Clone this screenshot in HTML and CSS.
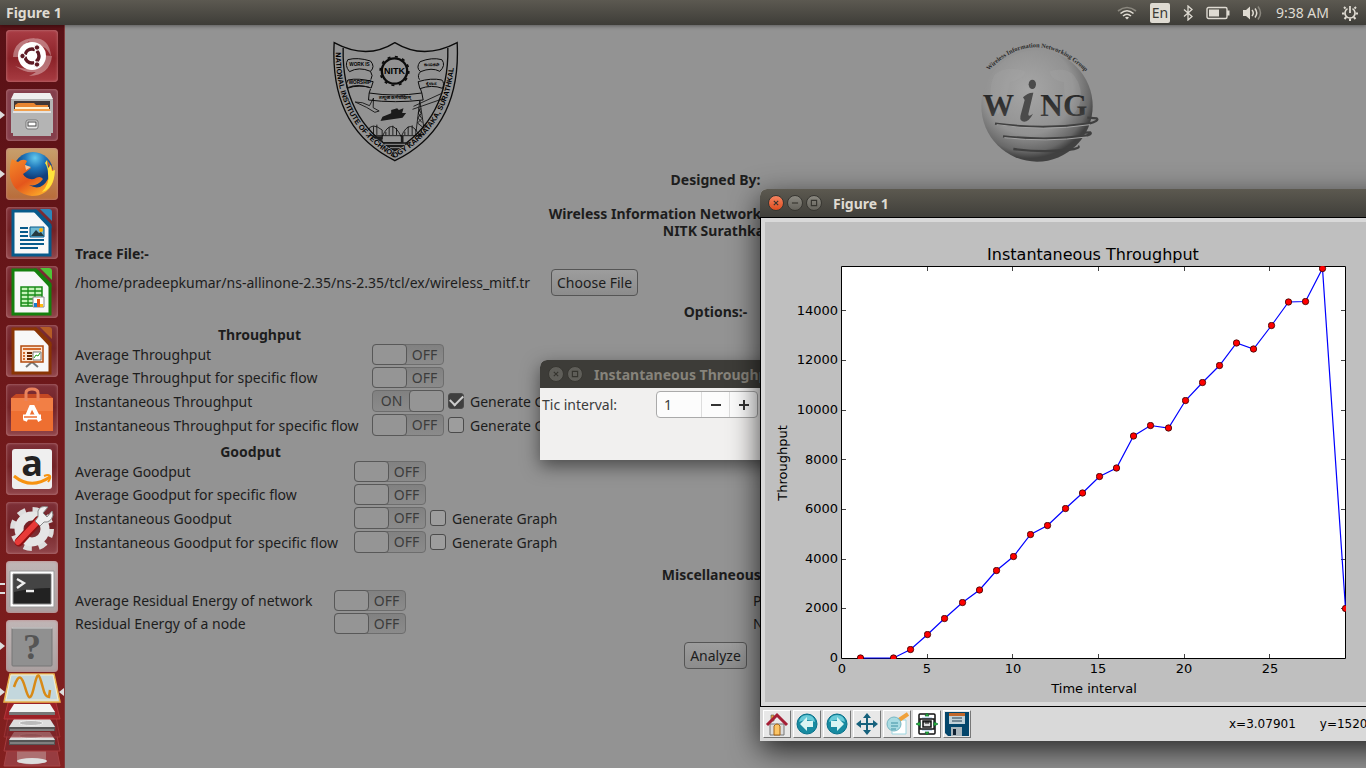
FILE: index.html
```html
<!DOCTYPE html>
<html lang="en">
<head>
<meta charset="utf-8">
<title>Figure 1</title>
<link rel="stylesheet" href="styles.css">
</head>
<body>
<div class="desktop">
<header class="panel">
  <span class="panel-title">Figure 1</span>
  <div class="indicators">
    <svg width="20" height="16" viewBox="0 0 20 16" fill="none" stroke-width="1.6"><path d="M1 6Q10-1 19 6" stroke="#8b887f"/><path d="M3.500 8.500Q10 3 16.500 8.500M6 11Q10 7.500 14 11" stroke="#dfdbd2"/><path d="M8 12.500Q10 11 12 12.500L10 14.500Z" fill="#dfdbd2"/></svg>
    <span class="lang">En</span>
    <svg width="10" height="16" viewBox="0 0 10 16" fill="none" stroke="#dfdbd2" stroke-width="1.300"><path d="M1 4.500L9 11.500L5 15V1L9 4.500L1 11.500"/></svg>
    <svg width="24" height="14" viewBox="0 0 24 14"><rect x="1" y="1.500" width="20" height="11" rx="1.500" fill="none" stroke="#dfdbd2" stroke-width="1.400"/><path d="M3 3.500H13V10.500H3ZM21 4.500H23.500V9.500H21Z" fill="#dfdbd2"/></svg>
    <svg width="20" height="16" viewBox="0 0 20 16"><path d="M0 5H3L7 1.500V14.500L3 11H0Z" fill="#dfdbd2"/><path d="M9 5Q11.500 8 9 11M12 3.500Q15.500 8 12 12.500" fill="none" stroke="#dfdbd2" stroke-width="1.500"/><path d="M15 1.500Q20 8 15 14.500" fill="none" stroke="#8b887f" stroke-width="1.500"/></svg>
    <time class="clock">9:38 AM</time>
    <svg width="16" height="16" viewBox="0 0 16 16" fill="none" stroke="#dfdbd2"><path d="M5.500 3.600A5 5 0 1 0 10.500 3.600" stroke-width="1.600"/><path d="M8 1V8" stroke-width="1.800"/><path d="M3.500 3.500L2 2M12.500 3.500L14 2M2.500 8.500H0M13.500 8.500H16M4.300 12L2.500 14M11.700 12L13.500 14M8 13.500V16" stroke-width="2"/></svg>
  </div>
</header>
<div class="workspace">
<nav class="launcher" aria-label="Launcher">
  <button class="tile dash" aria-label="Dash"><svg viewBox="0 0 52 52"><path d="M7 27Q8 9 29 8Q15 13 17 27M22 9Q43 5 45 26Q39 13 25 15M46 26Q44 45 23 46Q38 40 36 25M43 33Q29 50 9 36Q20 41 32 38" fill="#fff" opacity=".35"/><circle cx="26" cy="26" r="14" fill="#fff"/><circle cx="26" cy="26" r="7" fill="none" stroke="#5d1a24" stroke-width="3.400" stroke-dasharray="12.600 2.060" stroke-dashoffset="6"/><g fill="#5d1a24" stroke="#fff"><circle cx="16.500" cy="26" r="2.700"/><circle cx="31" cy="17.500" r="2.700"/><circle cx="31" cy="34.500" r="2.700"/></g></svg></button>
  <button class="tile files running" aria-label="Files"><svg viewBox="0 0 52 52"><path d="M8 4H44L47 11V44H5V11Z" fill="#b5b5b5"/><path d="M8 4H44L47 10H5Z" fill="#eee"/><path d="M8 12H44V24H8Z" fill="#403636"/><path d="M9 16L12 14H28L30 16H42V24H9Z" fill="#e88631"/><path d="M9 18H43V21H9Z" fill="#fff0cf"/><path d="M8 20H44V24H8Z" fill="#f3a04b"/><path d="M7 22H45V47H7Z" fill="#b4b4b4"/><path d="M7 22H45V24H7Z" fill="#e2e2e2"/><rect x="20" y="31" width="12" height="9" rx="2" fill="#e9e9e9" stroke="#777" stroke-width="1"/><rect x="22" y="33" width="8" height="4" fill="#fff" stroke="#444"/></svg></button>
  <button class="tile firefox running" aria-label="Firefox"><svg viewBox="0 0 52 52"><defs><radialGradient id="globe" cx=".55" cy=".15"><stop offset="0" stop-color="#63c9ec"/><stop offset=".5" stop-color="#1f77bb"/><stop offset="1" stop-color="#123f7c"/></radialGradient><linearGradient id="fox" x2=".8" y2="1"><stop stop-color="#f48a2a"/><stop offset=".55" stop-color="#e4561c"/><stop offset="1" stop-color="#ffb62b"/></linearGradient></defs><circle cx="27" cy="24" r="20" fill="url(#globe)"/><path d="M6 11L12 14Q17 10 21 13L19 17L25 20Q20 24 17 26Q20 32 28 31Q34 27 37 31Q31 39 23 37Q35 44 42 31Q45 24 41 12Q51 24 47 34Q41 48 26 48Q8 46 4 29Q3 18 6 11Z" fill="url(#fox)"/><path d="M41 12L42 20L45 17L46 23L49 22Q48 41 36 44Q44 35 42 26Q42 19 39 15Z" fill="#ffe23b"/><path d="M19 17L25 19L20 22Z" fill="#f8c496"/></svg></button>
  <button class="tile" aria-label="LibreOffice Writer"><svg viewBox="0 0 52 52"><path d="M7 4H30L44 18V48H7Z" fill="#f8f8f8" stroke="#075a8b" stroke-width="3"/><path d="M28 3L45 21" stroke="#075a8b" stroke-width="3"/><path d="M34 2H43Q46 2 46 5V14Z" fill="#2e86b8"/><path d="M14 21H22M14 25H22M14 29H22M14 33H38M14 37H38M14 41H32" stroke="#075a8b" stroke-width="2"/><path d="M24 20H38V30H24Z" fill="#70bad4" stroke="#075a8b"/><path d="M25 29L30 23L33 26L35 25L38 29Z" fill="#263b40"/><circle cx="35" cy="23" r="2" fill="#ffb300"/></svg></button>
  <button class="tile" aria-label="LibreOffice Calc"><svg viewBox="0 0 52 52"><path d="M7 4H30L44 18V48H7Z" fill="#f8f8f8" stroke="#15800d" stroke-width="3"/><path d="M28 3L45 21" stroke="#15800d" stroke-width="3"/><path d="M34 2H43Q46 2 46 5V14Z" fill="#4fc438"/><path d="M15 21H36V40H15Z" fill="#c5f3b8" stroke="#188b17" stroke-width="1.500"/><path d="M15 25H36M15 29H36M15 33H36M15 37H36M22 21V40M29 21V40" stroke="#188b17" stroke-width="1.300"/><path d="M27 31H38V41H27Z" fill="#fff" stroke="#888"/><path d="M28 37H31V41H28Z" fill="#187bd0"/><path d="M31 33H34V41H31Z" fill="#e55813"/><path d="M34 38H37V41H34Z" fill="#ffbd13"/></svg></button>
  <button class="tile" aria-label="LibreOffice Impress"><svg viewBox="0 0 52 52"><path d="M7 4H30L44 18V48H7Z" fill="#f8f8f8" stroke="#8a3505" stroke-width="3"/><path d="M28 3L45 21" stroke="#8a3505" stroke-width="3"/><path d="M34 2H43Q46 2 46 5V14Z" fill="#b55c26"/><path d="M20 42L26 37L32 42" fill="none" stroke="#777" stroke-width="2"/><path d="M15 21H37V37H15Z" fill="#fce5d2" stroke="#b44b0e" stroke-width="1.500"/><path d="M17 24H35M17 28H19M17 31H19M17 34H19" stroke="#d46a2c" stroke-width="2"/><path d="M21 28H26M21 31H26M21 34H26" stroke="#6c2800" stroke-width="2"/><path d="M27 27H35V35H27Z" fill="#fff" stroke="#777"/><path d="M28 33L30 30L32 31L34 28" fill="none" stroke="#23a01c"/></svg></button>
  <button class="tile" aria-label="Software Center"><svg viewBox="0 0 52 52"><path d="M5 14L10 10H42L47 14Z" fill="#c44823"/><path d="M5 14H47V47H5Z" fill="#ee6f31"/><path d="M5 14H47V27H5Z" fill="#f58a54" opacity=".6"/><path d="M20 17V9Q20 5 26 5T32 9V17" fill="none" stroke="#e9835d" stroke-width="3"/><path d="M19 37L25 23H27L34 37" fill="none" stroke="#fff" stroke-width="4"/><path d="M17 33H35" stroke="#fff" stroke-width="5"/><path d="M18 33H31" stroke="#ee6f31" stroke-width="1.500"/></svg></button>
  <button class="tile" aria-label="Amazon"><svg viewBox="0 0 52 52"><rect x="6" y="6" width="40" height="40" rx="3" fill="#efefef"/><text x="26" y="33" text-anchor="middle" class="amazon-a">a</text><path d="M8 33Q25 47 44 34" fill="none" stroke="#f79310" stroke-width="3"/><path d="M38 33Q43 31 44 33T42 39" fill="none" stroke="#f79310" stroke-width="2"/></svg></button>
  <button class="tile" aria-label="System Settings"><svg viewBox="0 0 52 52"><circle cx="26" cy="27" r="19" fill="none" stroke="#ddd" stroke-width="6" stroke-dasharray="8 6.920"/><circle cx="26" cy="27" r="13" fill="none" stroke="#e5e5e5" stroke-width="9"/><path d="M13 40L33 18" stroke="#8d1012" stroke-width="9" stroke-linecap="round"/><path d="M12 40L32 19" stroke="#e83a38" stroke-width="6" stroke-linecap="round"/><path d="M29 19L34 24L38 20Q45 21 47 13L46 9L41 15L37 11L42 5Q34 3 32 9V15Z" fill="#eee" stroke="#888"/></svg></button>
  <button class="tile light running double" aria-label="Terminal"><svg viewBox="0 0 52 52"><path d="M4 10H48V46H4Z" fill="#fff" stroke="#999"/><path d="M7 13H45V43H7Z" fill="#222" stroke="#888"/><path d="M8 14H44V27Q25 27 8 31Z" fill="#444"/><path d="M11 18L18 22L11 27M20 30H28" fill="none" stroke="#eee" stroke-width="2.300"/></svg></button>
  <button class="tile light running" aria-label="Unknown application"><svg viewBox="0 0 52 52"><rect x="6" y="8" width="40" height="38" rx="1" fill="#909090" stroke="#777"/><path d="M6 8H46" stroke="#ddd"/><text x="26" y="39" text-anchor="middle" class="question">?</text></svg></button>
  <button class="stack" aria-label="Figure 1 and devices"><svg viewBox="0 0 64 96">
    <path d="M9 68H55L60 94H4Z" fill="#973c40" stroke="#a64447"/><path d="M17 75H46V90Q31 95 17 90Z" fill="#ad7071"/><ellipse cx="32" cy="89" rx="15" ry="3" fill="#ddd"/>
    <path d="M9 54H55L60 79H4Z" fill="#7e2428" stroke="#a53a3d"/><path d="M14 61H50L55 67V73H9V68Z" fill="#555"/><path d="M14 60H50L55 68H9Z" fill="#ddd"/><ellipse cx="31" cy="64" rx="12" ry="2.500" fill="#bbb" stroke="#eee"/><path d="M10 71H54" stroke="#aaa"/>
    <path d="M9 40H55L60 65H4Z" fill="#7e2428" stroke="#a53a3d" opacity=".7"/><path d="M14 48H50L55 54V59H9V55Z" fill="#555"/><path d="M14 47H50L55 55H9Z" fill="#ddd"/><ellipse cx="31" cy="51" rx="12" ry="2.500" fill="#bbb" stroke="#eee"/><path d="M10 58H54" stroke="#aaa"/>
    <path d="M9 27H55L60 47H4Z" fill="#9b2026" stroke="#b43539"/><path d="M14 34H50L55 40V43H9V40Z" fill="#777"/><path d="M14 32H50L55 40H9Z" fill="#f3f3f3"/>
    <path d="M10 2H54L60 30H4Z" fill="#c3d7dd" stroke="#edb44d" stroke-width="1.500"/><path d="M11 3H53L58 28H6Z" fill="none" stroke="#f8efce"/><path d="M14 15C19 0 22 5 25 15S30 32 34 15S39 1 43 16Q45 25 49 25L50 18" fill="none" stroke="#d88a17" stroke-width="2.500"/>
    <path d="M0 16L5 20L0 24ZM64 16L59 20L64 24Z" fill="#ddd"/></svg></button>
</nav>

<main class="app">
  <div class="logos">
    <svg class="nitk" viewBox="36 34 380 366" role="img" aria-label="NITK crest">
      <defs><path id="rim" d="M47 66Q43 282 224 385Q407 280 403 60"/></defs>
      <g fill="none" stroke="#0b0b0b" stroke-width="4"><path d="M42 39Q140 92 224 39Q310 92 411 39Q424 296 224 393Q28 296 42 39Z"/><path d="M69 55Q64 267 224 363Q387 267 383 55"/>
      <circle cx="223" cy="124" r="38" stroke-width="7"/><circle cx="223" cy="124" r="43" stroke-width="5" stroke-dasharray="9 13.500"/>
      <path d="M83 90Q112 82 151 94Q166 111 151 125Q116 110 88 126Q72 107 83 90M83 151Q115 144 159 156L153 175Q117 163 81 176Q76 159 83 151M151 125Q160 138 152 150M365 90Q335 82 300 96Q286 114 301 126Q335 112 359 125Q378 107 365 90M365 151Q333 144 294 156L299 177Q335 164 367 176Q374 160 365 151M301 126Q290 138 298 150M147 190Q224 202 305 190L309 211Q224 221 145 211ZM151 178L147 190M301 178L305 190" stroke-width="3"/>
      <path d="M105 217Q127 216 148 228L160 205L159 234L177 244L164 248L139 233ZM312 300L299 213L288 303M292 280L307 292M293 265L306 279M294 250L304 265M296 236L302 250M307 265L292 280M304 250L293 265M302 236L294 250M277 239L369 207M280 230L367 190M144 301Q155 277 186 301V321Q214 260 243 321Q270 260 299 321Q311 270 319 293M160 290V315M170 285V316M197 307V317M207 293V316M218 288V316M229 295V316M254 306V316M264 291V316M276 287V316M287 299V316M137 318H306" stroke-width="2.500"/></g>
      <path d="M181 274L187 261L213 251V241L231 236L236 241L250 236L246 250H258L247 264L185 273ZM156 320H188V337H242V319H250V338H274L224 362L170 328Z" fill="#1b1b1b"/><path d="M185 331H231M193 344H255M209 354H241" stroke="#939393" stroke-width="3"/>
      <path d="M84 172Q109 160 147 171L148 174Q115 165 82 175Z" fill="#111"/>
      <text class="crest-name" x="223" y="134" text-anchor="middle">NITK</text><text class="crest-motto" x="118" y="109" text-anchor="middle">WORK IS</text><text class="crest-motto" x="119" y="164" text-anchor="middle">WORSHIP</text><text class="crest-motto" x="224" y="209" text-anchor="middle">तत्पूजा कर्मचोदितम्</text><text class="crest-motto" x="334" y="110" text-anchor="middle">ಕಾಯಕವೇ</text><text class="crest-motto" x="334" y="165" text-anchor="middle">ಕೈಲಾಸ</text>
      <text class="crest-rim"><textPath href="#rim" startOffset="2">NATIONAL INSTITUTE OF TECHNOLOGY KARNATAKA, SURATHKAL</textPath></text>
    </svg>
    <svg class="wing" viewBox="30 36 360 364" role="img" aria-label="WiNG logo">
      <defs><radialGradient id="sphere" cx=".42" cy=".35" r=".62"><stop offset="0" stop-color="#a6a6a6"/><stop offset=".65" stop-color="#929292"/><stop offset=".9" stop-color="#686868"/><stop offset="1" stop-color="#414141"/></radialGradient><path id="arc" d="M56 124Q197-20 352 132"/><linearGradient id="letters" x2="0" y2="1"><stop stop-color="#222"/><stop offset="1" stop-color="#444"/></linearGradient></defs>
      <circle cx="201" cy="230" r="167" fill="url(#sphere)"/><path d="M74 136Q108 106 164 126Q171 145 119 159Q109 229 84 256Q45 193 74 136M239 126Q300 107 324 157Q349 216 306 260Q280 216 282 159Q241 151 239 126" fill="#a5a5a5" opacity=".3"/>
      <text class="wing-arc"><textPath href="#arc">Wireless Information Networking Group</textPath></text>
      <text class="wing-name" x="38" y="260">W</text><text class="wing-name" x="211" y="260">NG</text><g fill="#4b4b4b"><ellipse cx="187" cy="165" rx="11" ry="14"/><path d="M159 204Q173 189 190 190L175 254Q174 265 189 253Q174 282 157 276Q147 270 153 253L164 212Z"/></g>
      <g fill="none" stroke="#404040" stroke-width="7"><path d="M75 283Q222 302 357 283Q389 274 380 267L352 265"/><path d="M99 321Q230 335 343 320Q369 315 360 309L341 310"/><path d="M130 359Q231 372 312 359Q331 355 324 350"/></g><path d="M80 286Q220 307 360 286M103 325Q230 339 350 323" fill="none" stroke="#a3a3a3" stroke-width="3"/>
    </svg>
  </div>
  <div class="credits"><h2>Designed By:</h2><p>Wireless Information Networking Group (WiNG)</p><p>NITK Surathkal</p></div>
  <h2 class="trace-title">Trace File:-</h2>
  <div class="trace"><span class="trace-path">/home/pradeepkumar/ns-allinone-2.35/ns-2.35/tcl/ex/wireless_mitf.tr</span><button class="push">Choose File</button></div>
  <h2 class="options-title">Options:-</h2>
  <section class="group throughput">
    <h3>Throughput</h3>
    <label for="t1">Average Throughput</label><span class="switch"><input type="checkbox" role="switch" id="t1"><span>OFF</span></span>
    <label for="t2">Average Throughput for specific flow</label><span class="switch"><input type="checkbox" role="switch" id="t2"><span>OFF</span></span>
    <label for="t3">Instantaneous Throughput</label><span class="switch on"><input type="checkbox" role="switch" id="t3" checked><span>ON</span></span><label class="graph"><input type="checkbox" checked>Generate Graph</label>
    <label for="t4">Instantaneous Throughput for specific flow</label><span class="switch"><input type="checkbox" role="switch" id="t4"><span>OFF</span></span><label class="graph"><input type="checkbox">Generate Graph</label>
  </section>
  <section class="group goodput">
    <h3>Goodput</h3>
    <label for="g1">Average Goodput</label><span class="switch"><input type="checkbox" role="switch" id="g1"><span>OFF</span></span>
    <label for="g2">Average Goodput for specific flow</label><span class="switch"><input type="checkbox" role="switch" id="g2"><span>OFF</span></span>
    <label for="g3">Instantaneous Goodput</label><span class="switch"><input type="checkbox" role="switch" id="g3"><span>OFF</span></span><label class="graph"><input type="checkbox">Generate Graph</label>
    <label for="g4">Instantaneous Goodput for specific flow</label><span class="switch"><input type="checkbox" role="switch" id="g4"><span>OFF</span></span><label class="graph"><input type="checkbox">Generate Graph</label>
  </section>
  <h2 class="misc-title">Miscellaneous:-</h2>
  <section class="group misc">
    <label for="m1">Average Residual Energy of network</label><span class="switch"><input type="checkbox" role="switch" id="m1"><span>OFF</span></span><span class="other">Packet Delivery</span>
    <label for="m2">Residual Energy of a node</label><span class="switch"><input type="checkbox" role="switch" id="m2"><span>OFF</span></span><span class="other">Network Load</span>
  </section>
  <div class="actions"><button class="push">Analyze</button></div>
</main>
</div>

<section class="window dialog" aria-label="Instantaneous Throughput">
  <div class="titlebar"><button class="wb" aria-label="Close"><svg viewBox="0 0 16 16"><path d="M5.500 5.500L10.500 10.500M10.500 5.500L5.500 10.500"/></svg></button><button class="wb" aria-label="Maximize"><svg viewBox="0 0 16 16"><path d="M5 5H11V11H5Z"/></svg></button><span>Instantaneous Throughput</span></div>
  <div class="dialog-body"><label for="tic">Tic interval:</label><div class="spin"><input id="tic" type="text" value="1"><button aria-label="Decrease"><svg viewBox="0 0 12 12"><path d="M1 6H11"/></svg></button><button aria-label="Increase"><svg viewBox="0 0 12 12"><path d="M1 6H11M6 1V11"/></svg></button></div></div>
</section>

<section class="window figure" aria-label="Figure 1">
  <div class="titlebar"><button class="wb close" aria-label="Close"><svg viewBox="0 0 16 16"><path d="M5.500 5.500L10.500 10.500M10.500 5.500L5.500 10.500"/></svg></button><button class="wb" aria-label="Minimize"><svg viewBox="0 0 16 16"><path d="M4.500 8H11.500"/></svg></button><button class="wb" aria-label="Maximize"><svg viewBox="0 0 16 16"><path d="M5 5H11V11H5Z"/></svg></button><span>Figure 1</span></div>
  <div class="canvas">
    <svg class="chart" viewBox="765 222 644 480" role="img" aria-label="Instantaneous Throughput plot">
      <defs><clipPath id="axes"><path d="M841 266H1346V659H841Z"/></clipPath><marker id="dot" viewBox="0 0 8 8" refX="4" refY="4" markerWidth="8" markerHeight="8" markerUnits="userSpaceOnUse"><circle cx="4" cy="4" r="3.200" fill="#f00" stroke="#300" stroke-width=".8"/></marker></defs>
      <path d="M841.500 266.500H1345.500V658.500H841.500Z" fill="#fff" stroke="#000"/>
      <path d="M927.500 658V654M1012.500 658V654M1098.500 658V654M1184.500 658V654M1269.500 658V654M927.500 267V271M1012.500 267V271M1098.500 267V271M1184.500 267V271M1269.500 267V271M842 608.500H846M842 559.500H846M842 509.500H846M842 459.500H846M842 410.500H846M842 360.500H846M842 310.500H846M1345 608.500H1341M1345 559.500H1341M1345 509.500H1341M1345 459.500H1341M1345 410.500H1341M1345 360.500H1341M1345 310.500H1341" stroke="#444"/>
      <polyline clip-path="url(#axes)" fill="none" stroke="#00f" stroke-width="1.200" marker-start="url(#dot)" marker-mid="url(#dot)" marker-end="url(#dot)" points="860.500,658 893.500,658 910.500,649.500 927.500,634.500 944.500,618.500 962.500,602.500 979.500,590 996.500,570.500 1013.500,556.500 1030.500,534.500 1047.500,525.500 1065.500,508.500 1082.500,493 1099.500,476.500 1116.500,468 1133.500,436 1150.500,425.500 1168.500,428 1185.500,400.500 1202.500,382.500 1219.500,365.500 1236.500,343 1253.500,349 1271.500,325.500 1288.500,302 1305.500,301.500 1322.500,268.500 1345.500,608.500"/>
      <g class="ticks" text-anchor="end"><text x="838" y="662">0</text><text x="838" y="612">2000</text><text x="838" y="563">4000</text><text x="838" y="513">6000</text><text x="838" y="464">8000</text><text x="838" y="414">10000</text><text x="838" y="364">12000</text><text x="838" y="315">14000</text></g>
      <g class="ticks" text-anchor="middle"><text x="842" y="673">0</text><text x="927" y="673">5</text><text x="1013" y="673">10</text><text x="1098" y="673">15</text><text x="1184" y="673">20</text><text x="1270" y="673">25</text><text x="1094" y="693">Time interval</text><text transform="translate(787 463) rotate(-90)">Throughput</text></g>
      <text class="plot-title" x="1093" y="260" text-anchor="middle">Instantaneous Throughput</text>
    </svg>
  </div>
  <div class="toolbar">
    <button aria-label="Home"><svg viewBox="0 0 24 24"><path d="M5 12H19V23H5Z" fill="#ddd" stroke="#777"/><path d="M6 3H9V9H6Z" fill="#e6a13e" stroke="#555" stroke-width=".6"/><path d="M9 23V14Q12 10 15 14V23Z" fill="#fcc565" stroke="#a26317"/><path d="M2 13L12 3L22 13" fill="none" stroke="#a51f36" stroke-width="3"/></svg></button>
    <button aria-label="Back"><svg viewBox="0 0 24 24"><circle cx="12" cy="12" r="10" fill="#188ba1" stroke="#08718a"/><path d="M4 10Q5 3 12 3T20 10Q12 6 4 10" fill="#69cbd8"/><path d="M5 12L12 5V9H18V15H12V19Z" fill="#d9f5f3"/></svg></button>
    <button aria-label="Forward"><svg viewBox="0 0 24 24"><circle cx="12" cy="12" r="10" fill="#188ba1" stroke="#08718a"/><path d="M4 10Q5 3 12 3T20 10Q12 6 4 10" fill="#69cbd8"/><path d="M19 12L12 5V9H6V15H12V19Z" fill="#d9f5f3"/></svg></button>
    <button aria-label="Pan"><svg viewBox="0 0 24 24" fill="#16617c"><path d="M12 1L16 6H13V11H18V8L23 12L18 16V13H13V18H16L12 23L8 18H11V13H6V16L1 12L6 8V11H11V6H8Z"/></svg></button>
    <button aria-label="Zoom"><svg viewBox="0 0 24 24"><path d="M7 8H21V22H7Z" fill="#fff" stroke="#9dd5df"/><path d="M14 8L23 2" stroke="#f0a13b" stroke-width="4"/><circle cx="9" cy="12" r="7" fill="#a9dbe2" stroke="#77b6c2"/><path d="M6 11H13M6 14H13M6 17H11" stroke="#3e91a4"/></svg></button>
    <button aria-label="Subplots" class="white"><svg viewBox="0 0 24 24"><rect x="4" y="2" width="16" height="20" rx="1" fill="#fff" stroke="#111" stroke-width="1.500"/><path d="M7 5H17V19H7Z" fill="#c9def2"/><path d="M5 7H19V17H5Z" fill="#fff" stroke="#111" stroke-width="1.300"/><path d="M8 9H16V15H8Z" fill="#ddd" stroke="#111" stroke-width="1.500"/><path d="M8 10H16M11 9V12M13 9V12" stroke="#111"/><path d="M12 1L14 4H10ZM12 23L10 20H14ZM1 12L5 10V14ZM23 12L19 10V14Z" fill="#35bd34" stroke="#063" stroke-width=".7"/></svg></button>
    <button aria-label="Save" class="save"><svg viewBox="0 0 24 24"><path d="M0 0H24V24H3L0 21Z" fill="#04466b"/><path d="M4 1H20V12H4Z" fill="#c2d1d8"/><path d="M4 1H20V4H4Z" fill="#c2682c"/><path d="M7 6H17M7 9H17" stroke="#223e51"/><path d="M6 15H17V24H6Z" fill="#aab6bc"/><path d="M8 17H11V23H8Z" fill="#123"/></svg></button>
    <output class="coords"><span>x=3.07901</span><span>y=15206.3</span></output>
  </div>
</section>
</div>
</body>
</html>
```
FILE: styles.css
```css
* { box-sizing: border-box; }
body { margin: 0; font: 14px/17px "Noto Sans", "Open Sans", sans-serif; color: #1d1d1d; }
button, input { font: inherit; color: inherit; margin: 0; padding: 0; }
h2, h3, p { margin: 0; font-size: 14px; line-height: 17px; font-weight: 700; }
svg { display: block; }

.desktop { position: relative; min-height: 100vh; display: flex; flex-direction: column; overflow: hidden; background: #939393; }
.panel { height: 25px; display: flex; align-items: center; justify-content: space-between; padding: 0 8px 0 6px; background: linear-gradient(#5c5951, #3e3d38); color: #dfdbd2; box-shadow: 0 1px 4px rgba(0,0,0,.4); z-index: 1; }
.panel-title { font-weight: 700; }
.indicators { display: flex; align-items: center; gap: 13px; }
.lang { width: 20px; height: 20px; border-radius: 2px; background: #dfdbd2; color: #3c3b37; text-align: center; line-height: 20px; }

.workspace { flex: 1; display: flex; }
.launcher { width: 65px; padding: 5px 0 0 6px; display: flex; flex-direction: column; gap: 7px; background: linear-gradient(#591116, #83201f); border-right: 1px solid #82393b; }
.tile { position: relative; width: 52px; height: 52px; border: 0; border-radius: 4px; background: linear-gradient(#7d3038, #732226 45%, #90454a); box-shadow: inset 0 0 3px #c28387; }
.tile svg { width: 52px; height: 52px; }
.dash { background: linear-gradient(#a93d45, #8b2228 55%, #a83c42); }
.files { background: #843e4b; }
.firefox { background: linear-gradient(#c8a06c, #b86b39); }
.light { background: linear-gradient(#c0b6b6, #aaa0a0); }
.running::before { content: ""; position: absolute; left: -6px; top: 22px; border: 4px solid transparent; border-left: 5px solid #ddd; border-right: 0; }
.double::before { border: 0; width: 5px; height: 7px; top: 22px; border-top: 2px solid #ddd; border-bottom: 2px solid #ddd; }
.stack { margin: -7px 0 0 -6px; width: 64px; border: 0; background: none; }
.amazon-a { font: bold 36px "Open Sans", sans-serif; fill: #222; }
.question { font: bold 36px "Liberation Serif", serif; fill: #555; }

.app { flex: 1; padding: 16px 10px 0; }
.logos { display: grid; grid-template-columns: 1fr 1fr; justify-items: center; }
.nitk { width: 127px; height: 122px; }
.wing { width: 128px; height: 122px; padding-left: 8px; }
.crest-name { font: bold 27px "Liberation Sans", sans-serif; }
.crest-motto { font: bold 14px "Liberation Sans", sans-serif; }
.crest-rim { font: bold 22px "Liberation Sans", sans-serif; }
.wing-arc { font: bold 19px "Liberation Serif", serif; fill: #2c2c2c; }
.wing-name { font: bold 94px "Liberation Serif", serif; fill: url(#letters); }
.credits { margin-top: 8px; text-align: center; }
.credits h2 { margin-bottom: 17px; }
.trace-title { margin-top: 6px; }
.trace { margin-top: 7px; display: flex; align-items: center; gap: 8px; }
.trace-path { min-width: 468px; }
.push { height: 27px; padding: 0 5px; border: 1px solid #555; border-radius: 4px; background: linear-gradient(#9d9d9d, #8c8c8c); }
.options-title { margin-top: 7px; text-align: center; }
.group { display: grid; gap: 2px 0; align-items: center; line-height: 21px; }
.group h3 { grid-column: 1 / 3; text-align: center; margin-bottom: -1px; }
.group > label:not(.graph) { grid-column: 1; }
.throughput { margin-top: 5px; grid-template: 17px 21px 21px 22px 22px / 297px 72px 1fr; }
.goodput { margin-top: 6px; grid-template: 17px 21px 21px 22px 22px / 279px 72px 1fr; }
.misc { margin-top: 7px; grid-template: 21px 21px / 259px 72px 1fr; }
.switch { display: flex; height: 100%; border: 1px solid #6d6d6d; border-radius: 4px; background: linear-gradient(#818181, #8b8b8b); color: #3c3c3c; }
.switch input { appearance: none; width: 35px; margin: -1px; border: 1px solid #585858; border-radius: 4px; background: #959595; }
.switch span { flex: 1; text-align: center; line-height: 19px; }
.switch.on { flex-direction: row-reverse; }
.graph { display: flex; align-items: center; gap: 6px; padding-left: 4px; }
.graph input { appearance: none; width: 16px; height: 16px; border: 1px solid #4b4b4b; border-radius: 3px; background: #9d9d9d; display: grid; place-items: center; }
.graph input:checked { background: #3f3f3f; }
.graph input:checked::before { content: ""; width: 11px; height: 6px; border: solid #ccc; border-width: 0 0 2px 2px; transform: translateY(-2px) rotate(-45deg); }
.misc-title { margin-top: 13px; text-align: center; }
.other { padding-left: 347px; }
.actions { margin-top: 8px; text-align: center; }

.window { position: absolute; border-radius: 7px 7px 0 0; z-index: 2; }
.titlebar { height: 28px; display: flex; align-items: center; gap: 3px; padding-left: 8px; border-radius: 7px 7px 0 0; font-weight: 700; }
.titlebar span { padding-left: 8px; white-space: nowrap; }
.wb { width: 16px; height: 16px; border-radius: 50%; border: 1px solid #383732; background: linear-gradient(#8a8880, #64625b); }
.wb svg { width: 14px; height: 14px; fill: none; stroke: #35342f; stroke-width: 1.300; }
.wb.close { background: linear-gradient(#f68460, #df4d1f); }
.dialog { left: 540px; top: 360px; width: 430px; height: 100px; background: #f1f0ef; color: #3c3c3c; box-shadow: 0 6px 18px rgba(0,0,0,.5); }
.dialog .titlebar { background: #3d3c38; color: #86837b; }
.dialog .wb { background: #5f5e59; }
.dialog-body { display: grid; grid-template-columns: 114px 102px; padding: 3px 2px; align-items: center; }
.spin { height: 27px; display: grid; grid-template-columns: 44px 1fr 1fr; border: 1px solid #aaa; border-radius: 4px; background: #fcfcfc; overflow: hidden; }
.spin input { min-width: 0; border: 0; padding-left: 7px; background: none; }
.spin button { border: 0; border-left: 1px solid #ddd; background: none; display: grid; place-items: center; }
.spin svg { width: 12px; height: 12px; stroke: #333; stroke-width: 2; }

.figure { left: 760px; right: -48px; top: 189px; height: 552px; display: flex; flex-direction: column; background: #d9d9d9; box-shadow: 0 9px 30px rgba(0,0,0,.75); z-index: 3; }
.figure .titlebar { height: 29px; background: linear-gradient(#5c5950, #403f3a); color: #dfdbd2; border-bottom: 1px solid #000; }
.canvas { flex: 1; border: solid #000; border-width: 0 0 1px 1px; padding: 4px; }
.chart { width: 644px; height: 480px; background: #bfbfbf; font-family: "DejaVu Sans", sans-serif; }
.ticks { font-size: 13px; }
.plot-title { font-size: 16px; }
.toolbar { height: 34px; display: flex; align-items: center; gap: 2px; padding-left: 3px; }
.toolbar button { width: 28px; height: 28px; border: 1px solid #fff; border-right: 1px solid #777; border-bottom: 1px solid #777; background: #e8e8e8; display: grid; place-items: center; }
.toolbar svg { width: 24px; height: 24px; }
.toolbar .white { background: #fff; }
.coords { margin-left: 256px; display: flex; gap: 24px; font: 12px/16px "DejaVu Sans", sans-serif; color: #000; }
```
